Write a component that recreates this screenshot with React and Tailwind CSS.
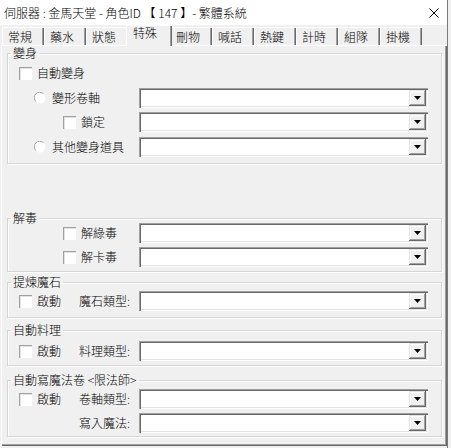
import React from 'react';

const tabs = ['常規', '藥水', '狀態', '特殊', '刪物', '喊話', '熱鍵', '計時', '組隊', '掛機'];

const Combo = () => (
  <div className="flex h-[20px] w-[289px] shrink-0 items-center justify-end bg-white pr-[2px] shadow-[inset_1px_1px_0_#a0a0a0,inset_2px_2px_0_#696969,inset_-1px_-1px_0_#ffffff,inset_-2px_-2px_0_#e3e3e3]">
    <div className="flex h-[16px] w-[17px] items-center justify-center bg-[#f0f0f0] shadow-[inset_-1px_-1px_0_#696969,inset_1px_1px_0_#e3e3e3,inset_-2px_-2px_0_#a0a0a0,inset_2px_2px_0_#ffffff]">
      <svg width="7" height="4" viewBox="0 0 7 4">
        <polygon points="0,0 7,0 3.5,4" fill="#000" />
      </svg>
    </div>
  </div>
);

const Check = () => (
  <span className="block h-[13px] w-[13px] shrink-0 bg-white shadow-[inset_1px_1px_0_#a0a0a0,inset_2px_2px_0_#e3e3e3,inset_-1px_-1px_0_#ffffff]" />
);

const Radio = () => (
  <svg width="12" height="12" viewBox="0 0 12 12" className="shrink-0">
    <circle cx="6" cy="6" r="5.5" fill="#fff" />
    <path d="M1.8 9.5 A5 5 0 0 1 9.5 1.8" stroke="#a0a0a0" strokeWidth="1" fill="none" />
  </svg>
);

const Group = ({ title, className, children }) => (
  <fieldset
    className={`ml-[6px] w-[435px] border border-[#d5d5d5] shadow-[inset_1px_1px_0_#ffffff,1px_1px_0_#ffffff] ${className}`}
  >
    <legend className="ml-[3px] px-[2px] leading-[10px]">{title}</legend>
    {children}
  </fieldset>
);

const Row = ({ className = '', children }) => (
  <div className={`flex h-[20px] items-center ${className}`}>{children}</div>
);

const Starter = ({ label }) => (
  <div className="flex w-[71px] shrink-0 items-center gap-[5px] pl-[11px]">
    {label && <Check />}
    {label && <span>{label}</span>}
  </div>
);

export default function App() {
  return (
    <div className="h-[448px] w-[451px] overflow-hidden bg-[#f0f0f0] font-['Noto_Sans_CJK_TC',sans-serif] text-[12px] font-light leading-[14px] text-black">
      <div className="w-[448px] border-r border-[#7a7a7a]">
        <div className="flex h-[25px] items-center justify-between bg-white pl-[4px] pr-[8px]">
          <span>伺服器 : 金馬天堂 - 角色ID 【 147 】- 繁體系統</span>
          <svg width="10" height="10" viewBox="0 0 10 10">
            <path d="M0.5 0.5 L9.5 9.5 M9.5 0.5 L0.5 9.5" stroke="#000" strokeWidth="1" />
          </svg>
        </div>

        <div className="flex h-[20px] items-end pl-[2px]">
          {tabs.map((t) =>
            t === '特殊' ? (
              <div
                key={t}
                className="relative z-10 -mx-[2px] -mb-[1px] h-[21px] w-[46px] bg-[#f0f0f0] pl-[7px] pt-[1px] shadow-[inset_1px_1px_0_#ffffff,inset_-1px_0_0_#696969,inset_-2px_0_0_#a0a0a0]"
              >
                {t}
              </div>
            ) : (
              <div
                key={t}
                className="h-[18px] w-[42px] pl-[6px] pt-[3px] shadow-[inset_1px_1px_0_#ffffff,inset_-1px_0_0_#696969,inset_-2px_0_0_#a0a0a0]"
              >
                {t}
              </div>
            )
          )}
        </div>

        <div className="ml-[1px] h-[401px] w-[446px] pt-[3px] shadow-[inset_1px_1px_0_#ffffff,inset_-1px_-1px_0_#696969,inset_-2px_-2px_0_#a0a0a0]">
          <Group title="變身" className="pb-[6px]">
            <Row className="mt-[5px] gap-[5px] pl-[11px]">
              <Check />
              <span>自動變身</span>
            </Row>
            <Row className="mt-[5px]">
              <div className="flex w-[131px] shrink-0 items-center gap-[6px] pl-[26px]">
                <Radio />
                <span>變形卷軸</span>
              </div>
              <Combo />
            </Row>
            <Row className="mt-[4px]">
              <div className="flex w-[131px] shrink-0 items-center gap-[5px] pl-[55px]">
                <Check />
                <span>鎖定</span>
              </div>
              <Combo />
            </Row>
            <Row className="mt-[5px]">
              <div className="flex w-[131px] shrink-0 items-center gap-[6px] pl-[26px]">
                <Radio />
                <span>其他變身道具</span>
              </div>
              <Combo />
            </Row>
          </Group>

          <Group title="解毒" className="mt-[49px] pb-[4px]">
            <Row>
              <div className="flex w-[131px] shrink-0 items-center gap-[5px] pl-[55px]">
                <Check />
                <span>解綠毒</span>
              </div>
              <Combo />
            </Row>
            <Row className="mt-[4px]">
              <div className="flex w-[131px] shrink-0 items-center gap-[5px] pl-[55px]">
                <Check />
                <span>解卡毒</span>
              </div>
              <Combo />
            </Row>
          </Group>

          <Group title="提煉魔石" className="mt-[5px] pb-[6px]">
            <Row className="mt-[4px]">
              <Starter label="啟動" />
              <span className="w-[60px] shrink-0">魔石類型:</span>
              <Combo />
            </Row>
          </Group>

          <Group title="自動料理" className="mt-[7px] pb-[4px]">
            <Row className="mt-[6px]">
              <Starter label="啟動" />
              <span className="w-[60px] shrink-0">料理類型:</span>
              <Combo />
            </Row>
          </Group>

          <Group title="自動寫魔法卷 <限法師>" className="mt-[9px] pb-[3px]">
            <Row className="mt-[4px]">
              <Starter label="啟動" />
              <span className="w-[60px] shrink-0">卷軸類型:</span>
              <Combo />
            </Row>
            <Row className="mt-[4px]">
              <Starter />
              <span className="w-[60px] shrink-0">寫入魔法:</span>
              <Combo />
            </Row>
          </Group>
        </div>
        <div className="h-[2px]" />
      </div>
    </div>
  );
}
